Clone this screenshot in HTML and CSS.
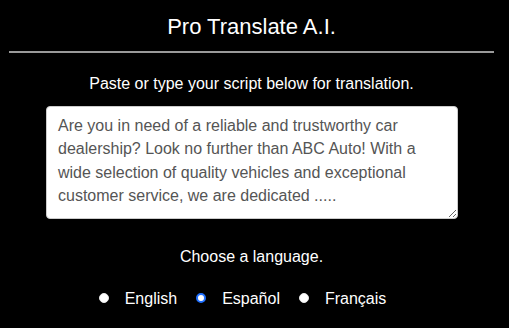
FILE: index.html
```html
<!DOCTYPE html>
<html lang="en">
<head>
<meta charset="utf-8">
<title>Pro Translate A.I.</title>
<link rel="stylesheet" href="styles.css">
</head>
<body>
<main class="page">
  <h1 class="title">Pro Translate A.I.</h1>
  <div class="rule"></div>
  <p class="prompt">Paste or type your script below for translation.</p>
  <textarea class="script" spellcheck="false">Are you in need of a reliable and trustworthy car dealership? Look no further than ABC Auto! With a wide selection of quality vehicles and exceptional customer service, we are dedicated .....</textarea>
  <p class="choose">Choose a language.</p>
  <div class="langs">
    <label class="lang"><input type="radio" name="lang" class="radio"><span>English</span></label>
    <label class="lang"><input type="radio" name="lang" class="radio" checked><span>Español</span></label>
    <label class="lang"><input type="radio" name="lang" class="radio"><span>Français</span></label>
  </div>
</main>
</body>
</html>
```
FILE: styles.css
```css
html, body {
  margin: 0;
  padding: 0;
  background: #000;
}
body {
  font-family: "Liberation Sans", Arial, sans-serif;
  color: #fff;
}
.page {
  width: 485px;
  margin-left: 9px;
  display: flex;
  flex-direction: column;
  align-items: center;
}
.title {
  margin: 14px 0 0;
  font-size: 22px;
  font-weight: normal;
  line-height: 26px;
  height: 26px;
}
.rule {
  align-self: stretch;
  height: 2px;
  background: #9a9a9a;
  margin-top: 11px;
}
.prompt {
  margin: 21px 0 0;
  font-size: 16px;
  line-height: 20px;
}
.script {
  box-sizing: border-box;
  width: 412px;
  height: 113px;
  margin: 12px 0 0 1px;
  padding: 7px 11px;
  border: 1px solid #ccc;
  border-radius: 4px;
  background: #fff;
  color: #555;
  font-family: "Liberation Sans", Arial, sans-serif;
  font-size: 16px;
  line-height: 1.46;
  outline: none;
}
.choose {
  margin: 28px 0 0;
  font-size: 16px;
  line-height: 20px;
}
.langs {
  display: flex;
  align-items: center;
  margin-top: 22px;
  margin-left: 1px;
  font-size: 16px;
  line-height: 20px;
}
.lang {
  display: flex;
  align-items: center;
  margin-right: 19px;
}
.radio {
  appearance: none;
  -webkit-appearance: none;
  box-sizing: border-box;
  width: 10px;
  height: 10px;
  margin: 0 16px 2px 0;
  border-radius: 50%;
  background: #fff;
  border: 1px solid #e8e8e8;
}
.radio:checked {
  border: 2.5px solid #1f6fff;
  background: #fff;
}
```
